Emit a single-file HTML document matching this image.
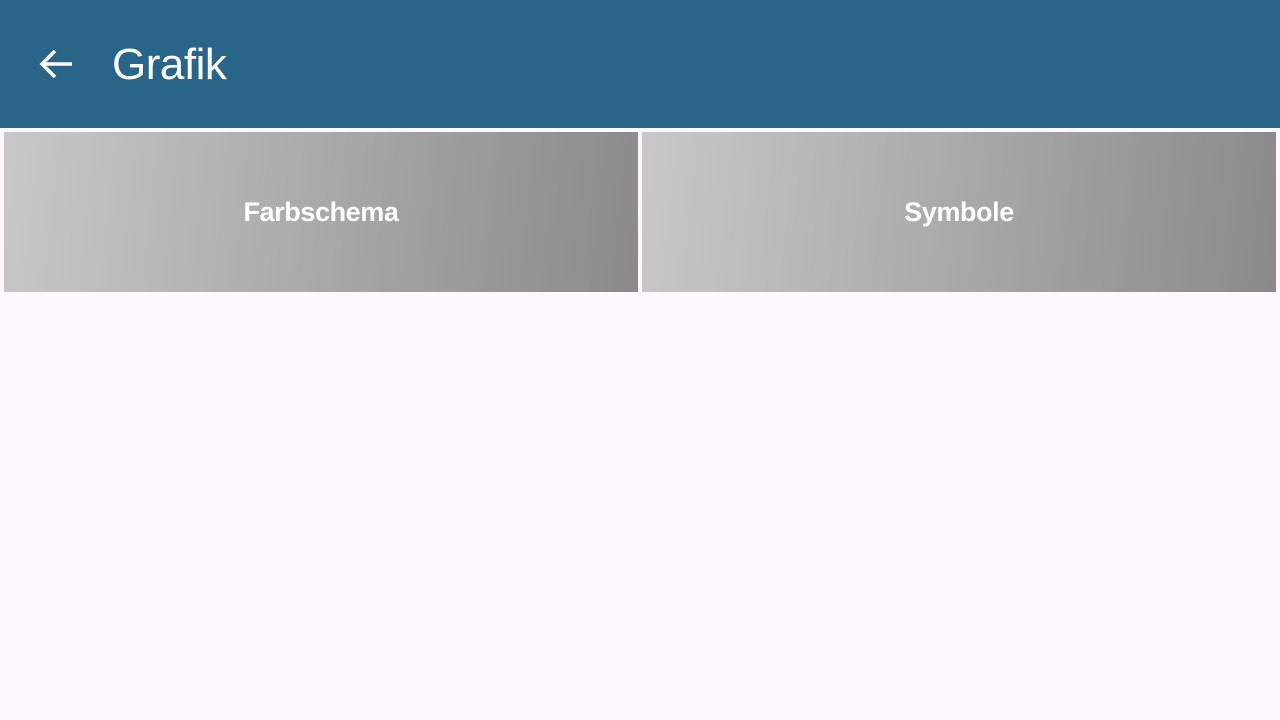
<!DOCTYPE html>
<html><head><style>
body{margin:0;width:1280px;height:720px;background:#fef7fc;font-family:"Liberation Sans",sans-serif;position:relative;overflow:hidden}
.hd{position:absolute;left:0;top:0;width:1280px;height:128px;background:#296588}
.t{position:absolute;left:112px;top:38px;color:#fff;font-size:44px;line-height:54px;letter-spacing:-0.5px}
.tile{position:absolute;top:132px;height:160px;width:634px;background:linear-gradient(96deg,#c8c8c8,#8a8a8a);color:#fff;font-size:27px;font-weight:bold;letter-spacing:-0.4px;display:flex;align-items:center;justify-content:center}
</style></head><body>
<div class="hd">
<svg style="position:absolute;left:36px;top:44px" width="40" height="40" viewBox="0 0 40 40"><path d="M36 20H7M19 7L6 20l13 13" stroke="#fff" stroke-width="3.5" fill="none"/></svg>
<div class="t">Grafik</div>
</div>
<div class="tile" style="left:4px">Farbschema</div>
<div class="tile" style="left:642px">Symbole</div>
</body></html>
